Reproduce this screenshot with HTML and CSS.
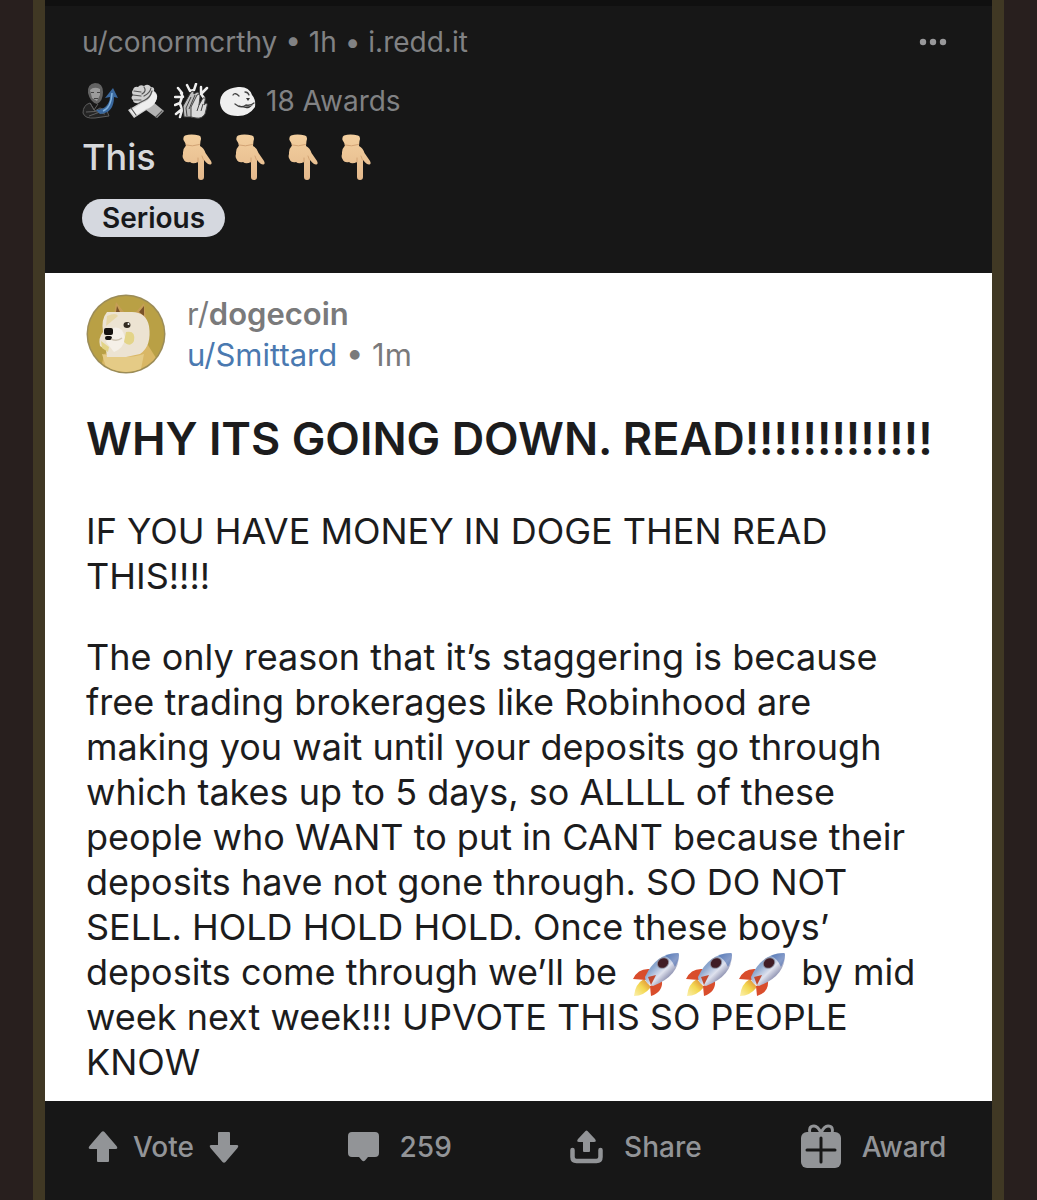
FILE: index.html
```html
<!DOCTYPE html>
<html lang="en">
<head>
<meta charset="utf-8">
<meta name="viewport" content="width=device-width, initial-scale=1">
<title>WHY ITS GOING DOWN</title>
<link rel="stylesheet" href="styles.css">
</head>
<body>
<svg class="defs" aria-hidden="true">
  <defs>
    <linearGradient id="skin" x1="0" y1="0" x2="0" y2="1">
      <stop offset="0" stop-color="#f3cf9f"/><stop offset="1" stop-color="#e4b98c"/>
    </linearGradient>
    <linearGradient id="hull" x1="0" y1="0" x2="1" y2="1">
      <stop offset="0" stop-color="#5f82b4"/><stop offset=".35" stop-color="#8fa9d0"/><stop offset=".55" stop-color="#dfe2ee"/><stop offset=".8" stop-color="#6b6f96"/>
    </linearGradient>
    <linearGradient id="flame" x1="1" y1="0" x2="0" y2="1">
      <stop offset="0" stop-color="#d8752f"/><stop offset=".5" stop-color="#f3d750"/><stop offset="1" stop-color="#fbf0ae"/>
    </linearGradient>
    <symbol id="point-down" viewBox="0 0 30 46">
      <path fill="url(#skin)" d="M3 1.500Q9-.6 17 1.500Q20 2.500 18.500 7L18 12Q22 14 23.500 19L29 27Q30.500 30 28.500 30.500Q26 31 22 26V43Q22 46 19 46T16 43V28Q11 30.500 8 28Q3 29 1.500 25Q0 23 1 20Q.5 15 4 11.500Q3.500 9 1.500 6Q.8 3 3 1.500Z"/>
      <path fill="none" stroke="#d3a475" stroke-width="1" stroke-linecap="round" d="M4 11Q10 13 17.500 10.500M16 28V24M21.500 26L20 22"/>
    </symbol>
    <symbol id="rocket" viewBox="0 0 46 44">
      <path fill="url(#flame)" d="M11 26Q2 31 1 43Q11 43 18 34Z"/>
      <path fill="#d94d2c" d="M17 16Q5 15 0 26L13 27ZM29 28Q30 39 18 43L17 33Z"/>
      <path fill="url(#hull)" d="M45 0Q23 0 12 24Q12 31 20 33Q46 23 46 2Q46 0 45 0Z"/>
      <path fill="#2f57a5" d="M45 0Q37 0 32 3Q38 5 42 14Q46 7 46 2Q46 0 45 0Z" opacity=".5"/>
      <path fill="#c2492f" d="M15 24L23 22L18 32Z"/>
      <ellipse cx="30" cy="10" rx="6.500" ry="5.500" fill="#8d8f9f" transform="rotate(-35 30 10)"/>
      <ellipse cx="30" cy="10" rx="5.500" ry="4.500" fill="#401c25" transform="rotate(-35 30 10)"/>
    </symbol>
  </defs>
</svg>
<main class="frame">
  <header class="post-head">
    <div class="meta">
      <p class="byline">u/conormcrthy • 1h • i.redd.it</p>
      <button class="more" type="button" aria-label="More options">
        <svg width="28" height="8" viewBox="0 0 28 8" fill="currentColor"><circle cx="4" cy="4" r="3.200"/><circle cx="14" cy="4" r="3.200"/><circle cx="24" cy="4" r="3.200"/></svg>
      </button>
    </div>
    <div class="awards">
      <svg width="36" height="36" viewBox="0 0 36 36" aria-hidden="true">
        <path fill="#636363" d="M6 10Q5 1 13 0Q21 0 21 9Q21 18 15 21Q8 19 6 10Z"/>
        <path fill="#9c9c9c" d="M8 7Q12 3 18 6L18 12L15 18L10 15Z"/>
        <path fill="#454545" d="M9 9h3v1H9zM15 9h3v1h-3zM12 15h4v1h-4z"/>
        <path fill="#242424" stroke="#5c5c5c" stroke-width="1" d="M8 20Q1 22 1 30Q3 36 13 35L27 33L25 28L18 25L13 28Z"/>
        <path fill="none" stroke="#606060" d="M4 29Q13 27 23 31M7 33L18 29M8 20L12 27L16 21"/>
        <path fill="#3a689e" d="M14 27Q27 26 28 14L23 15L31 5L36 15L32 14Q32 30 18 31Z"/>
        <path fill="none" stroke="#7fb0dc" stroke-width="1.500" d="M21 28Q29 25 30 10"/>
      </svg>
      <svg width="36" height="36" viewBox="0 0 36 36" aria-hidden="true">
        <path fill="#b4b4b4" d="M25 19L36 28L29 35L18 27Z"/>
        <path fill="#d0d0d0" d="M5 7Q6 3 10 4Q12 1 16 3Q20 0 23 4Q27 4 26 8Q30 11 29 15Q27 22 20 26L6 35L0 27L12 20Q5 21 5 17Q2 15 5 12Q3 9 5 7Z"/>
        <path fill="#eee" d="M25 8Q31 12 28 18Q25 24 18 26L7 33L2 28L14 20Q21 18 23 12Z"/>
        <path fill="none" stroke="#555" stroke-width="1.200" stroke-linecap="round" d="M6 8L13 9M5 12L13 13M6 17L13 17M16 4Q19 8 14 11M23 5Q22 10 16 13M24 8Q22 15 17 17L11 20M3 25L8 32M28 34L34 28"/>
      </svg>
      <svg width="36" height="36" viewBox="0 0 36 36" aria-hidden="true">
        <path fill="none" stroke="#eee" stroke-width="2.500" stroke-linecap="round" stroke-linejoin="round" d="M13 2L16 8L20 7L22 1M8 10L4 5M33 5L27 11L30 15M7 10L9 14L1 14M8 14L6 20L1 22M6 21L8 26L2 31M8 27L6 34M27 10L27 4"/>
        <path fill="#bdbdbd" stroke="#333" stroke-width="1" d="M10 34L9 23L17 9Q20 7 20 11L23 9Q26 9 25 14L26 24L20 34Z"/>
        <path fill="#dadada" stroke="#444" stroke-width="1" d="M17 34L17 24L23 12Q26 10 26 14L25 22L29 15Q32 14 31 18L30 22Q34 18 33 23L31 31Q28 36 22 35Z"/>
        <path fill="none" stroke="#444" d="M17 14L12 25L13 33M21 12L15 26M25 22L23 28M29 21L27 28"/>
      </svg>
      <svg width="36" height="36" viewBox="0 0 36 36" aria-hidden="true">
        <path fill="#efefef" d="M18 4Q29 3 32 12Q36 16 35 24Q29 33 18 33Q2 33 0 20Q0 6 18 4Z"/>
        <path fill="none" stroke="#444" stroke-width="1.300" stroke-linecap="round" d="M13 12Q15 9 19 13M25 9Q28 9 29 12M15 21Q21 26 26 22Q31 23 34 20"/>
        <path fill="#333" d="M26 15H30L28 18ZM18 22Q25 25 33 22L29 25Q23 26 18 22Z"/>
      </svg>
      <span class="award-count">18 Awards</span>
    </div>
    <div class="headline">
      <h2>This</h2>
      <span class="hands" role="img" aria-label="pointing down four times">
        <svg width="30" height="46"><use href="#point-down"/></svg>
        <svg width="30" height="46"><use href="#point-down"/></svg>
        <svg width="30" height="46"><use href="#point-down"/></svg>
        <svg width="30" height="46"><use href="#point-down"/></svg>
      </span>
    </div>
    <span class="flair">Serious</span>
  </header>

  <article class="card">
    <div class="author">
      <svg width="80" height="80" viewBox="0 0 80 80" aria-hidden="true">
        <defs><clipPath id="coin"><circle cx="40" cy="40" r="38"/></clipPath></defs>
        <circle cx="40" cy="40" r="39.500" fill="#9b8c58"/>
        <circle cx="40" cy="40" r="38" fill="#b9a045"/>
        <g clip-path="url(#coin)">
          <path fill="#d9b765" d="M18 60L60 48L70 64L62 80H14Z"/>
          <path fill="#e5cb86" d="M16 60Q40 66 58 60L54 80H22Z"/>
          <path fill="#c69e56" d="M28 20L30 8L38 18ZM48 20L58 9L60 26Z"/>
          <path fill="#795229" d="M53 18L58 12L58 22ZM30 18L31 12L34 18Z"/>
          <path fill="#ece3d2" d="M21 18H46Q60 18 63 32Q66 52 54 60L40 63H21L20 56L14 52Q12 44 17 38Q15 25 21 18Z"/>
          <path fill="#f5f0e8" d="M26 34Q37 31 39 44Q38 54 28 58L20 48Z"/>
          <path fill="#e3d488" d="M40 38Q50 36 48 47Q44 54 38 48ZM15 47L23 53L22 58L16 54Z"/>
          <path fill="#e5d193" d="M21 22Q30 18 32 22L20 32Z" opacity=".7"/>
        </g>
        <rect x="18" y="34" width="9" height="7" rx="2" fill="#15120f"/>
        <rect x="19" y="42" width="7" height="4" rx="2" fill="#15120f"/>
        <ellipse cx="41" cy="31" rx="3.500" ry="3" fill="#322a20"/>
        <circle cx="42.500" cy="30" r="1" fill="#fff"/>
        <path d="M25 45Q31 48 36 44" fill="none" stroke="#cfc5b4" stroke-width="1.500"/>
      </svg>
      <div class="names">
        <p>r/<b>dogecoin</b></p>
        <p><a href="#smittard">u/Smittard</a> • 1m</p>
      </div>
    </div>
    <h1>WHY ITS GOING DOWN. READ!!!!!!!!!!!!!</h1>
    <p class="text">IF YOU HAVE MONEY IN DOGE THEN READ THIS!!!!</p>
    <p class="text">The only reason that it’s staggering is because free trading brokerages like Robinhood are making you wait until your deposits go through which takes up to 5 days, so ALLLL of these people who WANT to put in CANT because their deposits have not gone through. SO DO NOT SELL. HOLD HOLD HOLD. Once these boys’ deposits come through we’ll be <span class="rockets" role="img" aria-label="three rockets"><svg width="46" height="44"><use href="#rocket"/></svg><svg width="46" height="44"><use href="#rocket"/></svg><svg width="46" height="44"><use href="#rocket"/></svg></span> by mid week next week!!! UPVOTE THIS SO PEOPLE KNOW</p>
  </article>

  <footer class="actions">
    <div class="vote">
      <button type="button"><svg width="30" height="32" viewBox="0 0 30 32" fill="currentColor" aria-hidden="true"><path d="M13.500 1Q15-.5 16.500 1L28.500 15Q30.500 18 27.500 18H21V30Q21 31 20 31H10Q9 31 9 30V18H2.500Q-.5 18 1.500 15Z"/></svg>Vote</button>
      <button type="button" aria-label="Downvote"><svg width="30" height="32" viewBox="0 0 30 32" fill="currentColor"><path d="M13.500 31Q15 32.500 16.500 31L28.500 17Q30.500 14 27.500 14H21V2Q21 1 20 1H10Q9 1 9 2V14H2.500Q-.5 14 1.500 17Z"/></svg></button>
    </div>
    <button type="button" class="spaced" aria-label="259 comments"><svg width="31" height="32" viewBox="0 0 31 32" fill="currentColor"><path d="M4 1H27Q31 1 31 5V22Q31 26 27 26H20L17 29.500Q15.500 31 14 29.500L11 26H4Q0 26 0 22V5Q0 1 4 1Z"/></svg>259</button>
    <button type="button" class="spaced"><svg width="33" height="34" viewBox="0 0 33 34" fill="currentColor" aria-hidden="true"><path d="M15.500 1Q16.500 0 17.500 1L25 9Q27 12 24 12H20V21Q20 22 19 22H14Q13 22 13 21V12H9Q6 12 8 9Z"/><path d="M2.500 20V27Q2.500 31 6.500 31H26.500Q30.500 31 30.500 27V20" fill="none" stroke="currentColor" stroke-width="4.500" stroke-linecap="round"/></svg>Share</button>
    <button type="button" class="spaced"><svg width="40" height="46" viewBox="0 0 40 46" aria-hidden="true"><path d="M9 10Q7 2 13 2Q17 2 20 9Q23 2 27 2Q33 2 31 10" fill="none" stroke="currentColor" stroke-width="3"/><rect y="8" width="40" height="36" rx="6" fill="currentColor"/><path d="M20 14V38M6 26H34" stroke="#171717" stroke-width="3" stroke-linecap="round"/></svg>Award</button>
  </footer>
</main>
</body>
</html>
```
FILE: styles.css
```css
* { box-sizing: border-box; }

body {
  margin: 0;
  background: #281f1e;
  font-family: Inter, "Liberation Sans", sans-serif;
}

h1, h2, p { margin: 0; }

button {
  padding: 0;
  border: 0;
  background: none;
  color: inherit;
  font: inherit;
}

svg { flex: none; }

.defs {
  position: absolute;
  width: 0;
  height: 0;
}

.frame {
  display: flex;
  flex-direction: column;
  min-height: 100vh;
  margin: 0 33px;
  border: solid #403824;
  border-width: 0 12px;
  background: #171717;
}

.post-head {
  padding: 18px 41px 36px 37px;
  border-top: 6px solid #101010;
  color: #818284;
  font-size: 28px;
}

.meta {
  display: flex;
  justify-content: space-between;
  align-items: center;
  line-height: 36px;
}

.more {
  display: flex;
  padding: 4px;
  color: #98989a;
}

.awards {
  display: flex;
  align-items: center;
  gap: 10px;
  margin-top: 23px;
  line-height: 36px;
}

.headline {
  display: flex;
  align-items: center;
  gap: 26px;
  margin-top: 14px;
  color: #d7d9dc;
}

.headline h2 {
  font-size: 36px;
  font-weight: 500;
  line-height: 48px;
}

.hands {
  display: flex;
  gap: 23px;
}

.flair {
  display: block;
  width: fit-content;
  margin-top: 18px;
  padding: 0 20px;
  border-radius: 20px;
  background: #d5d8df;
  color: #17181b;
  font-weight: 600;
  line-height: 38px;
}

.card {
  padding: 20px 41px 16px;
  background: #fff;
  color: #1c1c1d;
}

.author {
  display: flex;
  align-items: center;
  gap: 21px;
  color: #7a7a7b;
  font-size: 31px;
  line-height: 41px;
}

.author b { font-weight: 600; }

.author a {
  color: #4a79b0;
  text-decoration: none;
}

h1 {
  margin-top: 39px;
  font-size: 45px;
  font-weight: 600;
  line-height: 50px;
  white-space: nowrap;
}

.text {
  margin-top: 36px;
  padding-right: 15px;
  font-size: 36px;
  line-height: 45px;
}

h1 + .text { margin-top: 45px; }

.rockets {
  display: inline-flex;
  gap: 7px;
  height: 44px;
  margin: -4px 6px;
  vertical-align: middle;
}

.actions {
  display: grid;
  grid-template-columns: 259fr 222fr 230fr 146fr;
  padding: 23px 45px 30px 43px;
  color: #929497;
  font-size: 28px;
  font-weight: 500;
  line-height: 46px;
}

.actions button {
  display: flex;
  align-items: center;
  gap: 15px;
}

.actions .spaced { gap: 21px; }

.vote {
  display: flex;
  gap: 15px;
}
```
